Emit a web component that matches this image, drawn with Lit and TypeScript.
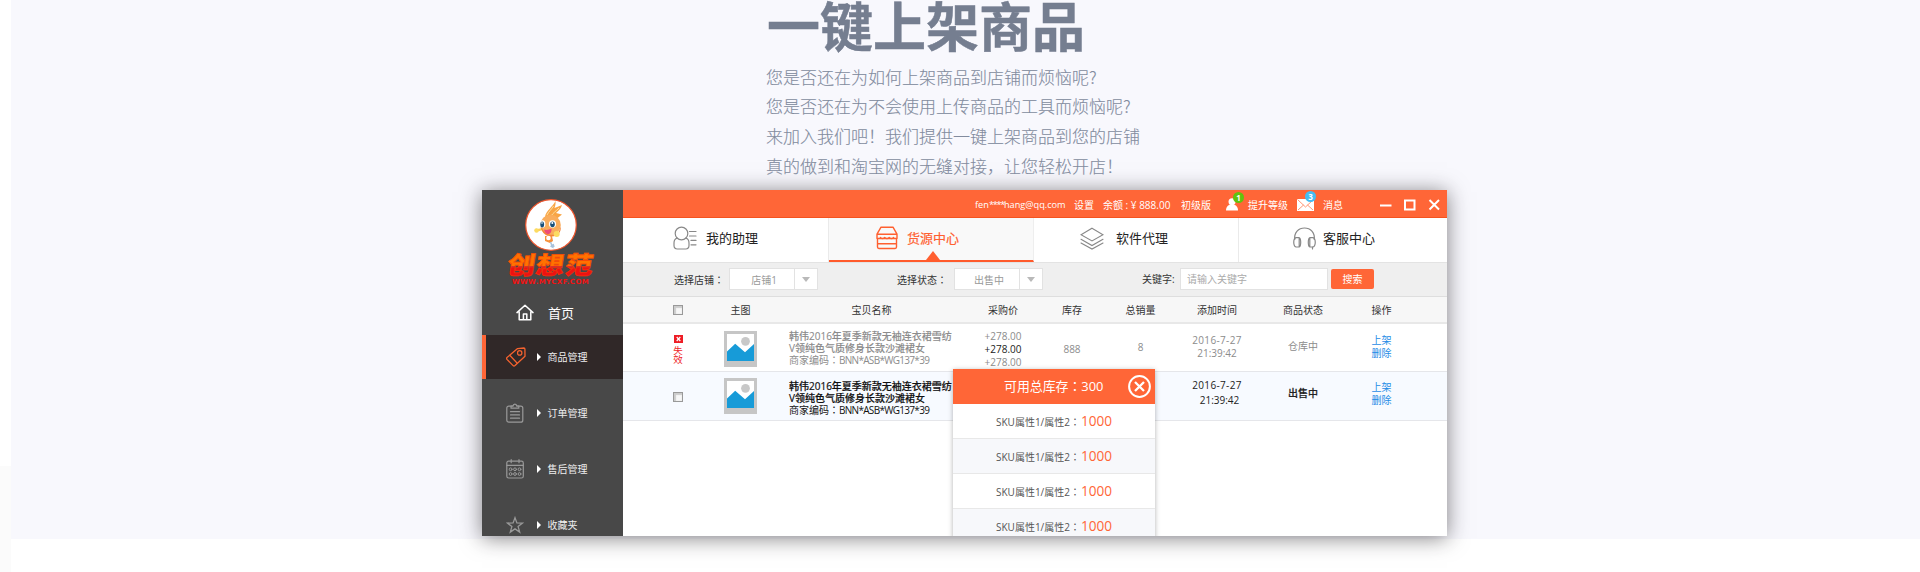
import { LitElement, html, css, svg } from "lit";
import { customElement, property } from "lit/decorators.js";

const stroke = (size: [number, number], body: unknown, cls = "") => html`<svg
  class=${cls}
  width=${size[0]}
  height=${size[1]}
  viewBox="0 0 ${size[0]} ${size[1]}"
  fill="none"
  stroke="currentColor"
  stroke-width="1.2"
  stroke-linejoin="round"
  stroke-linecap="round"
>${body}</svg>`;

const icons = {
  home: stroke([18, 17], svg`<path stroke-width="1.5" d="M1 8.6 9 1.2l8 7.4M3.2 7.4v8.4h4.2V10h3.4v5.8h4V7.4M3.2 15.8h11.6"/>`),
  tag: stroke([20, 20], svg`<path stroke-width="1.3" d="M11.600 1.600 17.800 1c.7 0 1.100.5 1.100 1.100l.1 7.200L9 18.600c-.7.6-1.300.6-1.900 0L1 12.400c-.6-.7-.6-1.300 0-1.900z"/><path stroke-width="1.200" d="M4 8.500l7 7.500"/><circle cx="13.700" cy="5.900" r="2.200"/>`),
  clipboard: stroke([18, 20], svg`<rect x=".8" y="3.200" width="16" height="16" rx="2"/><path fill="#484848" d="M5 5.200V3.200h2C7.200.400 10.600.400 10.800 3.200h2v2z"/><path d="M4.500 8.700h9M4.500 11.900h9M4.500 15.200h9"/>`),
  calendar: stroke([18, 20], svg`<rect x=".8" y="2.200" width="16.500" height="16.800" rx="1.800"/><path d="M1 6.400h16M5.200.700v3M13 .700v3"/><g stroke-width="1"><circle cx="4.600" cy="10.300" r="1.400"/><circle cx="9" cy="10.300" r="1.400"/><circle cx="13.500" cy="10.300" r="1.400"/><circle cx="4.600" cy="15" r="1.400"/><circle cx="9" cy="15" r="1.400"/><circle cx="13.500" cy="15" r="1.400"/></g>`),
  star: stroke([18, 18], svg`<path stroke-width="1.300" stroke-linejoin="miter" d="M9 1.700l1.900 5.200 5.700.2-4.500 3.500 1.600 5.500L9 12.900l-4.700 3.200 1.600-5.500L1.400 7.100l5.700-.2z"/>`),
  person: stroke([24, 24], svg`<circle cx="8.500" cy="7.500" r="6.300"/><path d="M4.200 12C2 12.800 1 14.500 1 17v2.600C1 21.800 2.200 23 4.300 23h8.400c2.100 0 3.300-1.200 3.300-3.400V17c0-2.500-1-4.200-3.200-5M16.500 5.500h6.500M16.500 10h6.500M18 14.400h5M18 18.800h5"/>`),
  shop: stroke([22, 24], svg`<path stroke-width="1.400" d="M5 1.200h12l4 7v4.300H1V8.200zM1.300 8.200h19.400M1.500 12.500v8.600c0 .9.500 1.400 1.400 1.400h16.200c.9 0 1.400-.5 1.400-1.400v-8.600M2 17.800h18"/><path d="M4.300 11.500c1.500 1.500 3 1.500 4.400 0 1.500 1.500 3 1.500 4.500 0 1.500 1.500 3 1.500 4.500 0"/>`),
  layers: stroke([24, 23], svg`<path stroke-linejoin="miter" stroke-width="1.100" d="M12 1.200 23 7.700l-11 6.200L1 7.700zM1 12.300l11 6.200 11-6.200M1 16l11 6 11-6"/>`),
  headset: stroke([23, 23], svg`<path d="M1.700 12.500C1 5.500 5.500 1 11.500 1s10.500 4.500 9.800 11.500M19.500 20v2"/><path d="M3 10.700c-3 .8-3 8.500 0 9.300h3.200v-9.300zM20 10.700c3 .8 3 8.500 0 9.300h-3.200v-9.300zM6.200 10.700c2 .6 2 8.700 0 9.300M16.800 10.700c-2 .6-2 8.700 0 9.300"/>`),
};

const mascot = svg`
  <circle cx="26" cy="26" r="25.300" fill="#fff" stroke="#f0552c" stroke-width="1.200"/>
  <path d="M20 18C21 11 28 8 30.500 2c.3 3-.3 5-1 7L37 6c-1 4-4 6-6 8l6 1.500-5 4z" fill="#f8a545"/>
  <path d="M22 16c2-4 5-6 6.500-9M26 17c2-3 5-5 8-8" stroke="#fde0a0" fill="none"/>
  <path d="M18 31l-7 2c-3-2 0-4 1-3l6-1z" fill="#fbcf58"/>
  <circle cx="25.500" cy="26" r="10.300" fill="#f9ad5c"/>
  <path d="M16 27c2 6 7 10 14 8.500 3-1 5-4 5.500-8C37 33 32 38 26 37.500 20 37 16 33 16 27z" fill="#f3853b"/>
  <ellipse cx="17.500" cy="25" rx="2.900" ry="3.800" fill="#fff"/><ellipse cx="17.200" cy="25.500" rx="1.900" ry="2.900" fill="#17507a"/>
  <ellipse cx="27.500" cy="25" rx="3.600" ry="3.800" fill="#fff"/><ellipse cx="27.500" cy="25.300" rx="2.300" ry="2.900" fill="#17507a"/>
  <circle cx="17" cy="24" r=".8" fill="#fff"/><circle cx="27.300" cy="24" r="1" fill="#fff"/>
  <path d="M19 30.500c3 1 5 0 7.500-1 .5 4-2 6-4 5.500-1.800-.300-3-2-3.500-4.500z" fill="#ed4b78"/>
  <path d="M20 37h7l1 5-3 2-5-2z" fill="#f7923c"/><circle cx="23.500" cy="39" r="2.300" fill="#fff"/>
  <circle cx="31.700" cy="35" r="3" fill="#fcdb62"/><circle cx="11.500" cy="31.500" r="2.200" fill="#fcdb62"/>
  <path d="M25.500 43l2 5-2-1M28 45l1 3" stroke="#a9c3dc" stroke-width="1.500" fill="none"/>`;

const thumbnail = html`<svg class="thumb" width="33" height="36" viewBox="0 0 33 36">
  <path d="M0 0h33v36H0z" fill="#c6c6c6"/><path d="M3 3h27v27H3z" fill="#fff"/>
  <circle cx="21.500" cy="10.300" r="4.400" fill="#c8c8c8"/>
  <path d="M3 20.500 11.200 12.700l9.800 8.500 9-8.200v17H3z" fill="#179bd8"/></svg>`;

const colonStyle = css`
  .colon { font-family: "Noto Sans CJK TC", sans-serif; }
`;
const colon = html`<span class="colon" lang="zh-TW">：</span>`;

@customElement("side-nav")
export class SideNav extends LitElement {
  static styles = css`
    :host { display: flex; flex-direction: column; width: 141px; background: #484848; color: #eee; flex: none; }
    .logo { height: 101px; padding-top: 9px; box-sizing: border-box; display: flex; flex-direction: column; align-items: center; flex: none; }
    .logo svg { display: block; flex: none; margin-right: 3px; }
    .brand { font-size: 27px; line-height: 27px; height: 27px; font-weight: 900; letter-spacing: 1px; transform: skewX(-9deg) scale(1.03, .9); margin-right: 4px; white-space: nowrap;
      background: linear-gradient(#ff7200 0 55%, #d9342c 57%, #ee1111 66%); -webkit-background-clip: text; color: transparent; -webkit-text-stroke: .8px rgba(246, 60, 10, .75); }
    .site { font: 700 7px/8px "DejaVu Sans", sans-serif; color: #f31212; letter-spacing: .4px; white-space: nowrap; margin: 0 4px 0 0; }
    .item { height: 44px; margin-bottom: 12px; display: flex; align-items: center; font-size: 10px; box-sizing: border-box; border-left: 4px solid transparent; flex: none; }
    .item.home { margin: 0; font-size: 13px; color: #fff; }
    .label { padding-bottom: 2px; }
    .item.active { background: #302828; border-color: #ff6637; }
    .icon { width: 40px; margin-left: 11px; box-sizing: border-box; display: flex; align-items: center; padding: 0 0 1px 9px; color: #999; }
    .active .icon { color: #f5632f; }
    .home .icon { color: #fff; padding: 0 0 2px 19px; width: 51px; }
    .arrow { width: 0; height: 0; border: 4px solid transparent; border-left: 4.500px solid #fff; border-right: 0; margin: 0 6.500px 1px 0; }
  `;
  render() {
    const items: [string, unknown][] = [["商品管理", icons.tag], ["订单管理", icons.clipboard], ["售后管理", icons.calendar], ["收藏夹", icons.star]];
    return html`
      <div class="logo">
        <svg width="52" height="52" viewBox="0 0 52 52">${mascot}</svg>
        <div class="brand">创想范</div>
        <div class="site">WWW.MYCXF.COM</div>
      </div>
      <div class="item home"><span class="icon">${icons.home}</span><span class="label">首页</span></div>
      ${items.map(([label, icon], i) => html`<div class="item ${i === 0 ? "active" : ""}"><span class="icon">${icon}</span><i class="arrow"></i><span class="label">${label}</span></div>`)}
    `;
  }
}

@customElement("top-bar")
export class TopBar extends LitElement {
  static styles = css`
    :host { display: flex; align-items: center; height: 28px; box-sizing: border-box; padding: 2px 7px 0 0; justify-content: flex-end; background: #ff6637; border-bottom: 1px solid #f4531f; color: #fff; font-size: 10px; white-space: nowrap; }
    span { flex: none; }
    .mail { width: 99px; font-size: 9.200px; }
    .stars { letter-spacing: -1.300px; }
    .set { width: 29px; }
    .sum { width: 78px; }
    .level { width: 45px; }
    .up { width: 49px; }
    .msg { width: 57px; }
    .user { position: relative; width: 22px; height: 14px; }
    .env { position: relative; width: 26px; height: 14px; }
    svg { display: block; }
    .badge { position: absolute; top: -6px; left: 7px; width: 11px; height: 11px; border-radius: 50%; font-size: 8px; line-height: 11px; text-align: center; background: #61c20d; }
    .env .badge { left: 8px; top: -7px; background: #45bdf2; }
  `;
  render() {
    return html`
      <span class="mail">fen<span class="stars">****</span>hang@qq.com</span><span class="set">设置</span><span class="sum">余额 : ¥ 888.00</span><span class="level">初级版</span>
      <span class="user"><svg width="12" height="13" viewBox="0 0 12 13" fill="#fff"><circle cx="6" cy="3.800" r="3.500"/><path d="M0 12.500C0 9 2 7 4 7h4c2 0 4 2 4 5.500z"/></svg><b class="badge">1</b></span>
      <span class="up">提升等级</span>
      <span class="env"><svg width="17" height="13" viewBox="0 0 17 13"><path d="M0 1h17v12H0z" fill="#fff"/><path d="M.5 1.500 8.500 9l8-7.500M1 12l5.500-5M16 12l-5.500-5" fill="none" stroke="#ff8b67" stroke-width=".9"/></svg><b class="badge">3</b></span>
      <span class="msg">消息</span>
      <svg width="60" height="13" viewBox="0 0 60 13" fill="none" stroke="#fff" stroke-width="2"><path d="M0 7.500h11.500M25 2.500h9.500v9H25zM49.500 2l9.500 9.500M59 2l-9.500 9.500"/></svg>
    `;
  }
}

@customElement("tab-strip")
export class TabStrip extends LitElement {
  static styles = css`
    :host { display: grid; grid-template-columns: 206px 205px 205px 1fr; height: 44px; background: #fff; font-size: 13px; color: #222; }
    .tab { position: relative; display: flex; align-items: center; padding-bottom: 4px; box-sizing: border-box; border-right: 1px solid #eaeaea; white-space: nowrap; }
    .tab:last-child { border: 0; }
    .tab svg { color: #888; flex: none; }
    .tab span { padding-bottom: 2px; }
    .one { padding-left: 50px; gap: 9px; }
    .two { padding-left: 47px; gap: 9px; background: #f9f9f9; border-right-color: #eee; border-bottom: 2px solid #ff5a2b; padding-bottom: 2px; color: #ff6030; }
    .two svg { color: #ff6030; }
    .two span { -webkit-text-stroke: .2px; }
    .three { padding-left: 46px; gap: 12px; }
    .four { padding-left: 54px; gap: 7px; }
    .notch { position: absolute; bottom: 0; left: 97px; border: 7px solid transparent; border-bottom: 9px solid #ff5f30; border-top: 0; }
  `;
  render() {
    return html`
      <div class="tab one">${icons.person}<span>我的助理</span></div>
      <div class="tab two">${icons.shop}<span>货源中心</span><i class="notch"></i></div>
      <div class="tab three">${icons.layers}<span>软件代理</span></div>
      <div class="tab four">${icons.headset}<span>客服中心</span></div>`;
  }
}

@customElement("filter-bar")
export class FilterBar extends LitElement {
  static styles = [colonStyle, css`
    :host { display: flex; align-items: center; height: 35px; box-sizing: border-box; background: #efefef; border-top: 1px solid #e3e3e3; border-bottom: 1px solid #dedede; padding: 0 0 1px 51px; white-space: nowrap; color: #333; }
    .label { width: 55px; flex: none; padding-top: 1px; }
    .label.state { width: 57px; margin-left: 79px; }
    .label.key { width: 38px; margin-left: 99px; padding: 0 0 1px; }
    .select { display: flex; width: 89px; height: 22px; box-sizing: border-box; border: 1px solid #e2e2e2; background: #fff; color: #999; align-items: center; flex: none; }
    .value { flex: 1; text-align: center; padding-left: 4px; }
    .drop { width: 22px; height: 20px; border-left: 1px solid #e2e2e2; display: flex; align-items: center; justify-content: center; }
    .drop::after { content: ""; border: 4px solid transparent; border-top: 5px solid #b9b9b9; border-bottom: 0; }
    .input { width: 148px; height: 22px; line-height: 20px; box-sizing: border-box; border: 1px solid #e2e2e2; background: #fff; color: #aaa; padding-left: 6px; flex: none; }
    .go { width: 43px; height: 20px; line-height: 20px; border-radius: 2px; background: #ff6637; color: #fff; text-align: center; margin-left: 3px; }
  `];
  render() {
    return html`
      <span class="label">选择店铺${colon}</span><div class="select"><span class="value">店铺1</span><i class="drop"></i></div>
      <span class="label state">选择状态${colon}</span><div class="select"><span class="value">出售中</span><i class="drop"></i></div>
      <span class="label key">关键字:</span><div class="input">请输入关键字</div><div class="go">搜索</div>`;
  }
}

@customElement("goods-table")
export class GoodsTable extends LitElement {
  static styles = [colonStyle, css`
    :host { display: block; flex: 1; background: #fff; }
    .row { display: grid; grid-template-columns: 60px 61px 201px 62px 76px 61px 92px 80px 77px; padding-left: 27px; box-sizing: border-box; height: 48px; border-bottom: 1px solid #e5e6ea; text-align: center; white-space: nowrap; color: #8c8c8c; line-height: 13px; }
    .head { height: 27px; background: #f7f7f7; border-bottom: 2px solid #e8e8e8; align-items: center; color: #333; }
    .head span { padding-top: 1px; }
    .sel { height: 49px; background: #f7faff; color: #222; }
    .box { display: block; width: 10px; height: 10px; box-sizing: border-box; border: 1px solid #999; box-shadow: inset 1px 1px 1px 1px #ccc; background: #f7f7f7; margin: 0 0 0 23px; }
    .sel .box { margin-top: 20px; }
    .bad { color: #ee1c25; font-size: 9.500px; line-height: 9px; padding: 11px 4px 0 0; display: flex; flex-direction: column; align-items: center; }
    .bad svg { margin-bottom: 3px; }
    .thumb { display: block; margin: 7px auto 0; }
    .sel .thumb { margin-top: 6px; }
    .name { text-align: left; padding: 6px 0 0 18px; line-height: 12px; -webkit-text-stroke: .1px; }
    .sel .name { padding-top: 8px; color: #111; }
    .name .t { font-weight: 500; }
    .sel .name .t { -webkit-text-stroke: .2px; }
    .name .c { line-height: 11px; -webkit-text-stroke: 0; }
    .code { letter-spacing: -.7px; }
    .price { padding-top: 6px; }
    .price .cur { color: #222; }
    .stock { padding-top: 19px; }
    .sales { padding-top: 17px; }
    .time { padding-top: 10px; }
    .day { letter-spacing: .35px; }
    .sel .time { padding-top: 6px; line-height: 15px; }
    .sel .hour { padding-left: 5px; }
    .status { padding-top: 16px; }
    .sel .status { padding-top: 15px; font-weight: 500; -webkit-text-stroke: .2px; }
    .ops { padding-top: 10px; color: #1f8ce6; }
    .sel .ops { padding-top: 9px; }
  `];
  render() {
    const name = html`<div class="t">韩伟2016年夏季新款无袖连衣裙雪纺</div><div class="t">V领纯色气质修身长款沙滩裙女</div><div class="c">商家编码${colon}<span class="code">BNN*ASB*WG137*39</span></div>`;
    const time = html`<div class="time"><div class="day">2016-7-27</div><div class="hour">21:39:42</div></div>`;
    const ops = html`<div class="ops">上架<br />删除</div>`;
    return html`
      <div class="row head"><i class="box"></i>${["主图", "宝贝名称", "采购价", "库存", "总销量", "添加时间", "商品状态", "操作"].map((h) => html`<span>${h}</span>`)}</div>
      <div class="row">
        <div class="bad"><svg width="9" height="8" viewBox="0 0 9 8"><path d="M0 0h9v8H0z" fill="#ee1c25"/><path d="M2.700 2l3.600 4M6.300 2 2.700 6" stroke="#fff" stroke-width="1.200"/></svg><span>失</span><span>效</span></div>
        <div>${thumbnail}</div><div class="name">${name}</div>
        <div class="price">+278.00<div class="cur">+278.00</div>+278.00</div>
        <div class="stock">888</div><div class="sales">8</div>${time}<div class="status">仓库中</div>${ops}
      </div>
      <div class="row sel">
        <div><i class="box"></i></div><div>${thumbnail}</div><div class="name">${name}</div>
        <div></div><div></div><div></div>${time}<div class="status">出售中</div>${ops}
      </div>`;
  }
}

@customElement("stock-popup")
export class StockPopup extends LitElement {
  @property({ type: Array }) stock: number[] = [1000, 1000, 1000, 1000];
  static styles = [colonStyle, css`
    :host { display: block; width: 202px; background: #fff; box-shadow: 0 1px 5px rgba(0, 0, 0, .3); white-space: nowrap; }
    .title { height: 35px; display: flex; align-items: center; box-sizing: border-box; padding-left: 51px; justify-content: space-between; padding-right: 4px; background: #ff6637; color: #fff; font-size: 12.900px; }
    .title > span { padding-bottom: 2px; }
    .line { height: 35px; box-sizing: border-box; border-bottom: 1px solid #e8e8e8; display: flex; align-items: center; padding-left: 43px; color: #555; }
    .line:nth-child(odd) { background: #f7f8fb; }
    .line b { font-weight: 400; font-size: 13.600px; color: #ff6637; padding: 0 0 1px 1px; }
  `];
  render() {
    return html`<div class="title"><span>可用总库存${colon}300</span><svg width="23" height="23" viewBox="0 0 23 23" fill="none" stroke="#fff" stroke-width="2"><circle cx="11.500" cy="11.500" r="10.400"/><path d="M7 7l9 9M16 7l-9 9" stroke-width="2.300"/></svg></div>
      ${this.stock.map((n) => html`<div class="line"><span>SKU属性1/属性2${colon}</span><b>${n}</b></div>`)}`;
  }
}

@customElement("app-root")
export class AppRoot extends LitElement {
  static styles = css`
    :host { display: grid; grid-template-columns: 11px 1fr; width: 1920px; height: 572px; background: #fff; overflow: hidden; font-family: "Open Sans", "Noto Sans CJK SC", sans-serif; font-size: 10px; }
    .edge { background: linear-gradient(#fff 466px, #fbfbfb 466px); }
    .hero { height: 539px; background: #f8f8fd; }
    .copy { height: 190px; box-sizing: border-box; padding-left: 755px; color: #828b9e; font-family: "Noto Sans CJK SC", sans-serif; }
    h1 { margin: 0; height: 61.500px; line-height: 48px; font-size: 53px; font-weight: 700; color: #757e90; padding-left: 1px; -webkit-text-stroke: .5px; }
    p { margin: 0; font-size: 17px; line-height: 29.750px; font-weight: 300; -webkit-text-stroke: .12px; }
    .window { display: flex; width: 965px; height: 346px; margin-left: 471px; box-shadow: 0 2px 20px rgba(30, 26, 30, .55); }
    .clip { display: flex; width: 965px; height: 346px; overflow: hidden; position: relative; }
    .main { flex: 1; display: flex; flex-direction: column; min-width: 0; }
    stock-popup { position: absolute; left: 471px; top: 179px; }
  `;
  render() {
    return html`<div class="edge"></div>
      <div><div class="hero">
        <div class="copy">
          <h1>一键上架商品</h1>
          <p>您是否还在为如何上架商品到店铺而烦恼呢?</p>
          <p>您是否还在为不会使用上传商品的工具而烦恼呢?</p>
          <p>来加入我们吧！我们提供一键上架商品到您的店铺</p>
          <p>真的做到和淘宝网的无缝对接，让您轻松开店！</p>
        </div>
        <div class="window"><div class="clip">
          <side-nav></side-nav>
          <div class="main"><top-bar></top-bar><tab-strip></tab-strip><filter-bar></filter-bar><goods-table></goods-table></div>
          <stock-popup></stock-popup>
        </div></div>
      </div></div>`;
  }
}
